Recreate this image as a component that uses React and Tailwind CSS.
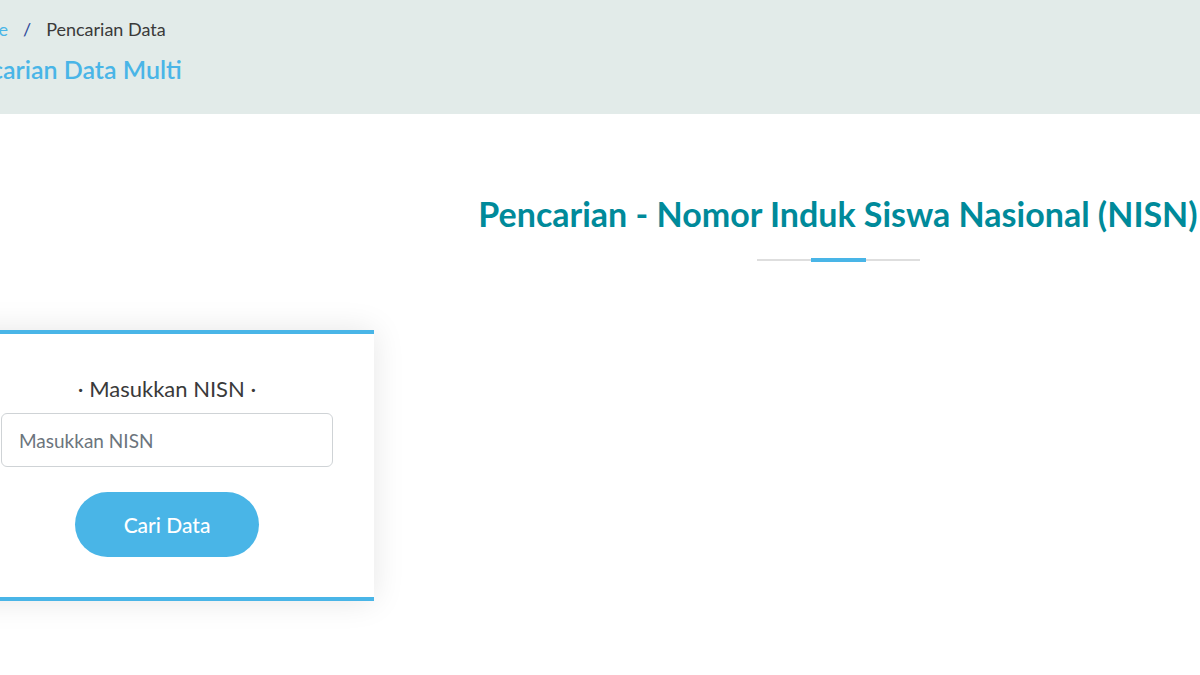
export default function App() {
  return (
    <main className="w-[1200px] h-[675px] overflow-hidden bg-white font-['Lato','Noto_Sans',sans-serif]">
      {/* page header */}
      <section className="h-[114px] bg-[#e2ebe9] pt-[16px]">
        <div className="-ml-[40px] flex items-center text-[18px] text-[#3a3a3a]">
          <a className="text-[#49b5e7]">Home</a>
          <span className="mx-[15px] text-[#2d4a9a]">/</span>
          <span>Pencarian Data</span>
        </div>
        <h1 className="-ml-[51px] mt-[8px] text-[25px] font-semibold text-[#49b5e7]">
          Pencarian Data Multi
        </h1>
      </section>

      {/* title */}
      <section className="ml-[476px] pt-[80px] text-center">
        <h2 className="whitespace-nowrap text-[34px] font-bold leading-[40px] text-[#008a9a]">
          Pencarian - Nomor Induk Siswa Nasional (NISN)
        </h2>
        <div className="mt-[24px] flex items-center justify-center">
          <div className="h-[2px] w-[54px] bg-[#dedede]" />
          <div className="h-[4px] w-[55px] bg-[#49b5e7]" />
          <div className="h-[2px] w-[54px] bg-[#dedede]" />
        </div>
      </section>

      {/* search card */}
      <section className="mt-[68px] -ml-[40px] w-[414px] border-y-4 border-[#49b5e7] bg-white px-[41px] pt-[38px] pb-[40px] shadow-[0_0_30px_rgba(0,0,0,0.10)]">
        <p className="text-center text-[22px] text-[#3a3a3a]">· Masukkan NISN ·</p>
        <input
          type="text"
          placeholder="Masukkan NISN"
          className="mt-[8px] h-[54px] w-full rounded-[6px] border border-[#cfd3d6] px-[17px] text-[19px] text-[#495057] placeholder:text-[#6c757d] outline-none"
        />
        <div className="mt-[25px] flex justify-center">
          <button className="h-[65px] w-[184px] rounded-full bg-[#49b5e7] text-[21px] font-medium text-white">
            Cari Data
          </button>
        </div>
      </section>
    </main>
  );
}
